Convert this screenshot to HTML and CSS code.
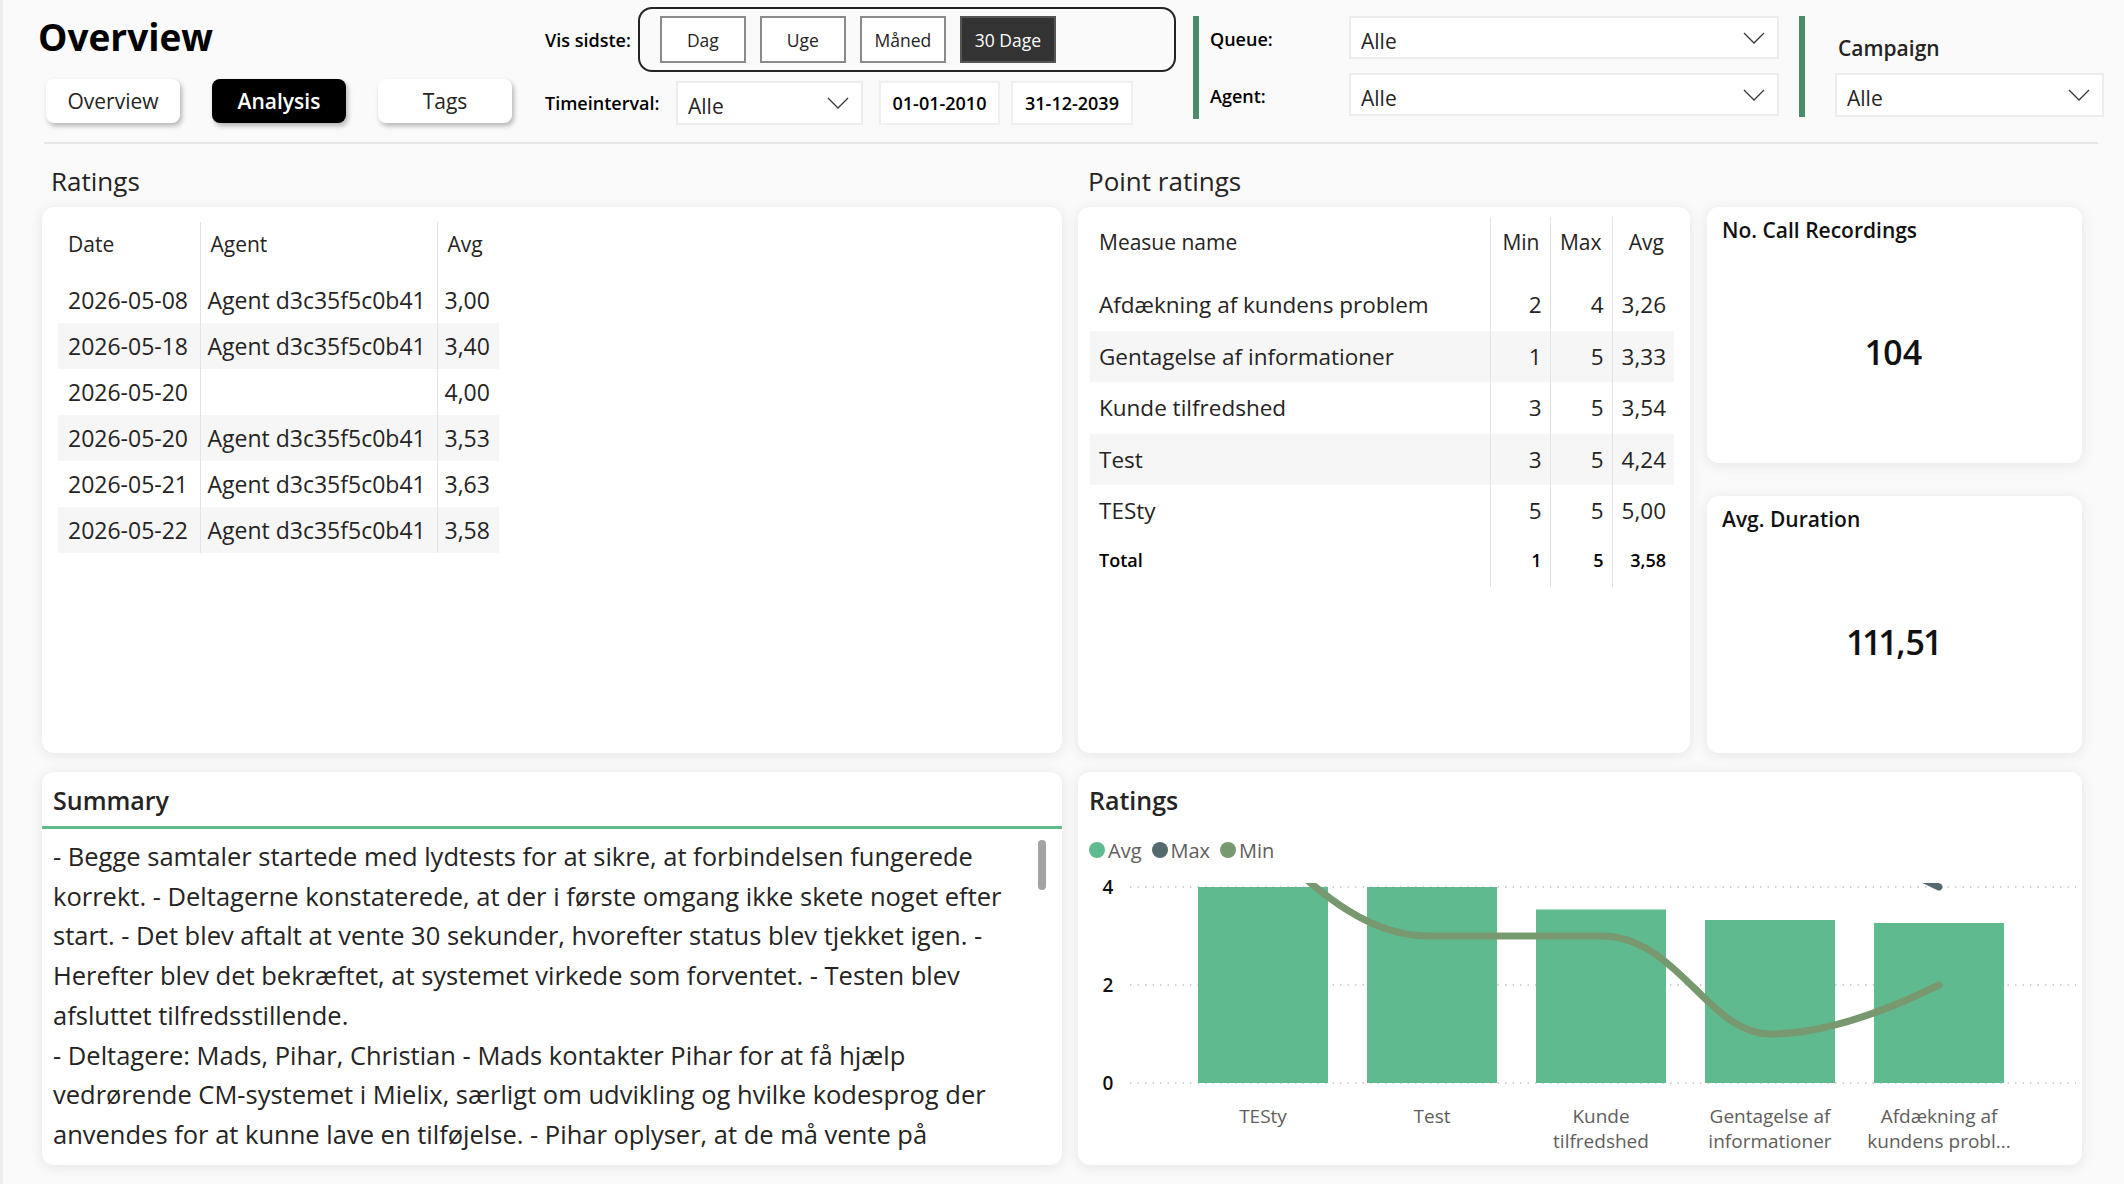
FILE: index.html
```html
<!DOCTYPE html>
<html lang="da">
<head>
    <meta charset="UTF-8">
    <meta name="viewport" content="width=device-width, initial-scale=1.0">
    <title>Overview - Analysis</title>
    <link rel="stylesheet" href="styles.css">
</head>
<body>
<div class="page">
    <header class="topbar">
        <div class="brand">
            <h1>Overview</h1>
            <nav class="tabs">
                <a class="tab" href="#">Overview</a>
                <a class="tab active" href="#">Analysis</a>
                <a class="tab" href="#">Tags</a>
            </nav>
        </div>

        <div class="filters">
            <div class="filter-row">
                <span class="filter-label">Vis sidste:</span>
                <div class="period-group">
                    <button class="period">Dag</button>
                    <button class="period">Uge</button>
                    <button class="period">Måned</button>
                    <button class="period selected">30 Dage</button>
                </div>
            </div>
            <div class="filter-row second">
                <span class="filter-label">Timeinterval:</span>
                <div class="dropdown interval">
                    <span>Alle</span>
                    <svg class="chevron" viewBox="0 0 22 12"><path d="M1 1 L11 11 L21 1"/></svg>
                </div>
                <div class="datebox">01-01-2010</div>
                <div class="datebox">31-12-2039</div>
            </div>
        </div>

        <div class="slicer-group">
            <span class="slicer-label">Queue:</span>
            <div class="dropdown">
                <span>Alle</span>
                <svg class="chevron" viewBox="0 0 22 12"><path d="M1 1 L11 11 L21 1"/></svg>
            </div>
            <span class="slicer-label">Agent:</span>
            <div class="dropdown">
                <span>Alle</span>
                <svg class="chevron" viewBox="0 0 22 12"><path d="M1 1 L11 11 L21 1"/></svg>
            </div>
        </div>

        <div class="slicer-group campaign">
            <span class="campaign-label">Campaign</span>
            <div class="dropdown">
                <span>Alle</span>
                <svg class="chevron" viewBox="0 0 22 12"><path d="M1 1 L11 11 L21 1"/></svg>
            </div>
        </div>
    </header>

    <div class="divider"></div>

    <main class="content">
        <section class="row top-row">
            <div class="column ratings-col">
                <h2 class="section-title">Ratings</h2>
                <div class="card table-card">
                    <table class="grid ratings-table">
                        <thead>
                            <tr><th>Date</th><th>Agent</th><th>Avg</th></tr>
                        </thead>
                        <tbody>
                            <tr><td>2026-05-08</td><td>Agent d3c35f5c0b41</td><td>3,00</td></tr>
                            <tr><td>2026-05-18</td><td>Agent d3c35f5c0b41</td><td>3,40</td></tr>
                            <tr><td>2026-05-20</td><td></td><td>4,00</td></tr>
                            <tr><td>2026-05-20</td><td>Agent d3c35f5c0b41</td><td>3,53</td></tr>
                            <tr><td>2026-05-21</td><td>Agent d3c35f5c0b41</td><td>3,63</td></tr>
                            <tr><td>2026-05-22</td><td>Agent d3c35f5c0b41</td><td>3,58</td></tr>
                        </tbody>
                    </table>
                </div>
            </div>

            <div class="column points-col">
                <h2 class="section-title">Point ratings</h2>
                <div class="card table-card">
                    <table class="grid points-table">
                        <thead>
                            <tr><th>Measue name</th><th class="num">Min</th><th class="num">Max</th><th class="num">Avg</th></tr>
                        </thead>
                        <tbody>
                            <tr><td>Afdækning af kundens problem</td><td class="num">2</td><td class="num">4</td><td class="num">3,26</td></tr>
                            <tr><td>Gentagelse af informationer</td><td class="num">1</td><td class="num">5</td><td class="num">3,33</td></tr>
                            <tr><td>Kunde tilfredshed</td><td class="num">3</td><td class="num">5</td><td class="num">3,54</td></tr>
                            <tr><td>Test</td><td class="num">3</td><td class="num">5</td><td class="num">4,24</td></tr>
                            <tr><td>TESty</td><td class="num">5</td><td class="num">5</td><td class="num">5,00</td></tr>
                        </tbody>
                        <tfoot>
                            <tr><td>Total</td><td class="num">1</td><td class="num">5</td><td class="num">3,58</td></tr>
                        </tfoot>
                    </table>
                </div>
            </div>

            <div class="column kpi-col">
                <div class="card kpi">
                    <div class="kpi-title">No. Call Recordings</div>
                    <div class="kpi-value">104</div>
                </div>
                <div class="card kpi">
                    <div class="kpi-title">Avg. Duration</div>
                    <div class="kpi-value">111,51</div>
                </div>
            </div>
        </section>

        <section class="row bottom-row">
            <div class="card summary">
                <h3 class="card-title underlined">Summary</h3>
                <div class="summary-body">
                    <p>- Begge samtaler startede med lydtests for at sikre, at forbindelsen fungerede korrekt. - Deltagerne konstaterede, at der i første omgang ikke skete noget efter start. - Det blev aftalt at vente 30 sekunder, hvorefter status blev tjekket igen. - Herefter blev det bekræftet, at systemet virkede som forventet. - Testen blev afsluttet tilfredsstillende.</p>
                    <p>- Deltagere: Mads, Pihar, Christian - Mads kontakter Pihar for at få hjælp vedrørende CM-systemet i Mielix, særligt om udvikling og hvilke kodesprog der anvendes for at kunne lave en tilføjelse. - Pihar oplyser, at de må vente på</p>
                    <div class="scroll-thumb"></div>
                </div>
            </div>

            <div class="card chart-card">
                <h3 class="card-title">Ratings</h3>
                <div class="legend">
                    <span class="legend-item"><i class="dot avg"></i>Avg</span>
                    <span class="legend-item"><i class="dot max"></i>Max</span>
                    <span class="legend-item"><i class="dot min"></i>Min</span>
                </div>
                <svg class="chart" width="1004" height="292" viewBox="0 0 1004 292">
                    <defs>
                        <clipPath id="plot"><rect x="0" y="13" width="1004" height="210"/></clipPath>
                    </defs>
                    <g class="axis">
                        <text x="30" y="24">4</text>
                        <text x="30" y="122">2</text>
                        <text x="30" y="220">0</text>
                    </g>
                    <g class="gridlines">
                        <line x1="52" y1="17" x2="998" y2="17"/>
                        <line x1="52" y1="115" x2="998" y2="115"/>
                        <line x1="52" y1="213" x2="998" y2="213"/>
                    </g>
                    <g class="bars">
                        <rect x="120" y="17" width="130" height="196"/>
                        <rect x="289" y="17" width="130" height="196"/>
                        <rect x="458" y="39.5" width="130" height="173.5"/>
                        <rect x="627" y="50" width="130" height="163"/>
                        <rect x="796" y="53" width="130" height="160"/>
                    </g>
                    <g clip-path="url(#plot)">
                        <path class="line-max" d="M523 -32 L692 -32 C760 -32 800 -12 861 17"/>
                        <path class="line-min" d="M195 -20 C235 15 285 66 350 66 L523 66 C600 66 630 164 692 164 C740 164 800 145 861 115"/>
                    </g>
                    <g class="xlabels">
                        <text x="185" y="253">TESty</text>
                        <text x="354" y="253">Test</text>
                        <text x="523" y="253">Kunde</text>
                        <text x="523" y="278">tilfredshed</text>
                        <text x="692" y="253">Gentagelse af</text>
                        <text x="692" y="278">informationer</text>
                        <text x="861" y="253">Afdækning af</text>
                        <text x="861" y="278">kundens probl...</text>
                    </g>
                </svg>
            </div>
        </section>
    </main>
</div>
</body>
</html>
```

FILE: styles.css
```css
* {
    box-sizing: border-box;
}

body {
    margin: 0;
    padding: 0;
    font-family: 'Segoe UI', 'Open Sans', sans-serif;
    color: #252423;
    background-color: #fafafa;
}

.page {
    width: 2124px;
    height: 1184px;
    overflow: hidden;
    border-left: 3px solid #ececec;
}

/* ---------- header ---------- */

.topbar {
    display: flex;
    height: 142px;
    padding-left: 35px;
}

.brand {
    width: 507px;
}

.brand h1 {
    margin: 13px 0 0 0;
    font-size: 37px;
    line-height: 48px;
    font-weight: 700;
    color: #000;
}

.tabs {
    display: flex;
    gap: 32px;
    margin: 18px 0 0 8px;
}

.tab {
    width: 134px;
    height: 44px;
    line-height: 44px;
    text-align: center;
    font-size: 21px;
    color: #252423;
    text-decoration: none;
    background-color: #fff;
    border-radius: 8px;
    box-shadow: 2px 3px 5px rgba(0,0,0,0.28);
}

.tab.active {
    background-color: #000;
    color: #fff;
    font-weight: 600;
}

.filters {
    width: 648px;
    padding-top: 7px;
}

.filter-row {
    display: flex;
    align-items: center;
    gap: 7px;
    height: 65px;
}

.filter-row.second {
    height: 44px;
    margin-top: 9px;
    gap: 0;
}

.filter-label {
    font-size: 18px;
    font-weight: 600;
    color: #000;
}

.filter-row.second .filter-label {
    width: 131px;
}

.period-group {
    display: flex;
    align-items: center;
    gap: 14px;
    width: 538px;
    height: 65px;
    padding-left: 20px;
    border: 2px solid #252423;
    border-radius: 14px;
}

.period {
    width: 86px;
    height: 47px;
    font-family: inherit;
    font-size: 17.5px;
    color: #252423;
    background-color: #fff;
    border: 2px solid #8a8a8a;
    border-radius: 0;
    padding: 0;
}

.period.selected {
    width: 96px;
    background-color: #333;
    border-color: #555;
    color: #fff;
}

.dropdown {
    display: flex;
    align-items: center;
    justify-content: space-between;
    height: 43px;
    padding: 0 12px 0 10px;
    background-color: #fff;
    border: 2px solid #ececec;
    font-size: 21px;
}

.dropdown span {
    padding-top: 6px;
}

.chevron {
    width: 22px;
    height: 12px;
    fill: none;
    stroke: #3a3a3a;
    stroke-width: 1.3;
}

.dropdown.interval {
    width: 187px;
    height: 44px;
}

.datebox {
    width: 121px;
    height: 44px;
    line-height: 40px;
    text-align: center;
    background-color: #fff;
    border: 2px solid #efefef;
    font-size: 18px;
    font-weight: 600;
    color: #000;
    margin-left: 16px;
}

.datebox + .datebox {
    width: 122px;
    margin-left: 11px;
}

.slicer-group {
    display: grid;
    grid-template-columns: 139px 430px;
    grid-template-rows: 43px 43px;
    row-gap: 14px;
    align-items: center;
    height: 103px;
    margin: 16px 0 0 0;
    padding-left: 11px;
    border-left: 6px solid #4a8c6c;
}

.slicer-label {
    padding-top: 2px;
    font-size: 18px;
    font-weight: 600;
    color: #000;
}

.slicer-group.campaign {
    display: block;
    height: 101px;
    margin-left: 20px;
    padding-left: 30px;
}

.campaign-label {
    display: block;
    padding: 17px 0 0 3px;
    line-height: 30px;
    font-size: 21px;
    font-weight: 600;
}

.campaign .dropdown {
    width: 269px;
    height: 44px;
    margin-top: 10px;
}

.divider {
    height: 2px;
    margin: 0 26px 0 41px;
    background-color: #e6e6e6;
}

/* ---------- content ---------- */

.content {
    padding-left: 39px;
}

.row {
    display: flex;
}

.top-row {
    height: 609px;
}

.column {
    display: flex;
    flex-direction: column;
}

.ratings-col {
    width: 1020px;
}

.points-col {
    width: 612px;
    margin-left: 16px;
}

.kpi-col {
    width: 375px;
    margin-left: 17px;
    padding-top: 63px;
    gap: 33px;
}

.section-title {
    margin: 0;
    padding: 19px 0 0 9px;
    height: 63px;
    line-height: 36px;
    font-size: 26px;
    font-weight: 400;
}

.points-col .section-title {
    padding-left: 10px;
}

.card {
    background-color: #fff;
    border-radius: 12px;
    box-shadow: 0 2px 14px rgba(0,0,0,0.09);
}

.table-card {
    height: 546px;
}

.grid {
    border-collapse: collapse;
}

.grid th {
    text-align: left;
    font-weight: 400;
    font-size: 21px;
    vertical-align: top;
}

.grid td {
    font-size: 23px;
    white-space: nowrap;
}

.grid td + td,
.grid th + th {
    border-left: 1px solid #e3e3e3;
}

.ratings-table {
    margin: 15px 0 0 16px;
    width: 441px;
}

.ratings-table th {
    height: 55px;
    padding: 8px 9px 0 10px;
}

.ratings-table td {
    height: 46px;
    padding: 0 6px 0 10px;
}

.ratings-table td + td {
    padding-left: 7px;
}

.ratings-table th:nth-child(1) { width: 142px; }
.ratings-table th:nth-child(2) { width: 237px; }

.ratings-table tbody tr:nth-child(even),
.points-table tbody tr:nth-child(even) {
    background-color: #f6f6f6;
}

.points-table {
    margin: 10px 0 0 12px;
    width: 584px;
}

.points-table th {
    height: 62px;
    padding: 11px 8px 0 9px;
}

.points-table th.num {
    padding-right: 10px;
}

.points-table th:nth-child(1) { width: 400px; }
.points-table th:nth-child(2) { width: 60px; }
.points-table th:nth-child(3) { width: 62px; }

.points-table td {
    height: 51.5px;
    padding: 0 8px 0 9px;
    font-size: 22.5px;
}

.points-table .num {
    text-align: right;
}

.points-table tfoot td {
    height: 50px;
    padding-bottom: 4px;
    font-size: 18px;
    font-weight: 600;
    color: #000;
}

.kpi {
    display: flex;
    flex-direction: column;
    height: 256px;
}

.kpi + .kpi {
    height: 257px;
}

.kpi-title {
    padding: 8px 0 0 15px;
    line-height: 30px;
    font-size: 21px;
    font-weight: 600;
    color: #111;
}

.kpi-value {
    flex: 1;
    display: flex;
    align-items: center;
    justify-content: center;
    padding-bottom: 4px;
    font-size: 34px;
    font-weight: 600;
    font-variant-numeric: proportional-nums;
    color: #111;
}

.bottom-row {
    margin-top: 19px;
    height: 393px;
}

.summary {
    width: 1020px;
    overflow: hidden;
}

.chart-card {
    width: 1004px;
    margin-left: 16px;
    overflow: hidden;
}

.card-title {
    margin: 0;
    padding: 10px 0 0 11px;
    line-height: 36px;
    font-size: 25px;
    font-weight: 600;
}

.card-title.underlined {
    padding-bottom: 8px;
    border-bottom: 3px solid #5dbb8e;
}

.summary-body {
    position: relative;
    height: 342px;
    padding: 8px 40px 0 11px;
    overflow: hidden;
}

.summary-body p {
    margin: 0;
    font-size: 25.5px;
    line-height: 39.7px;
}

.scroll-thumb {
    position: absolute;
    top: 11px;
    right: 16px;
    width: 8px;
    height: 50px;
    border-radius: 4px;
    background-color: #a3a3a3;
}

.legend {
    display: flex;
    gap: 10px;
    margin: 20px 0 0 11px;
    height: 24px;
    align-items: center;
    font-size: 20px;
    color: #605e5c;
}

.legend-item {
    display: flex;
    align-items: center;
    gap: 3px;
}

.dot {
    flex: none;
    width: 16px;
    height: 16px;
    border-radius: 50%;
}

.dot.avg { background-color: #5fba8f; }
.dot.max { background-color: #546a6e; }
.dot.min { background-color: #78986f; }

.chart {
    display: block;
    margin-top: 8px;
}

.axis text {
    font-size: 19px;
    font-weight: 600;
    fill: #111;
    text-anchor: middle;
}

.gridlines line {
    stroke: #c4c4c4;
    stroke-width: 1.5;
    stroke-dasharray: 1.5 6;
}

.bars rect {
    fill: #5fba8f;
}

.line-min,
.line-max {
    fill: none;
    stroke-width: 7;
    stroke-linecap: round;
}

.line-min { stroke: #78986f; }
.line-max { stroke: #546a6e; }

.xlabels text {
    font-size: 19px;
    fill: #605e5c;
    text-anchor: middle;
}
```
